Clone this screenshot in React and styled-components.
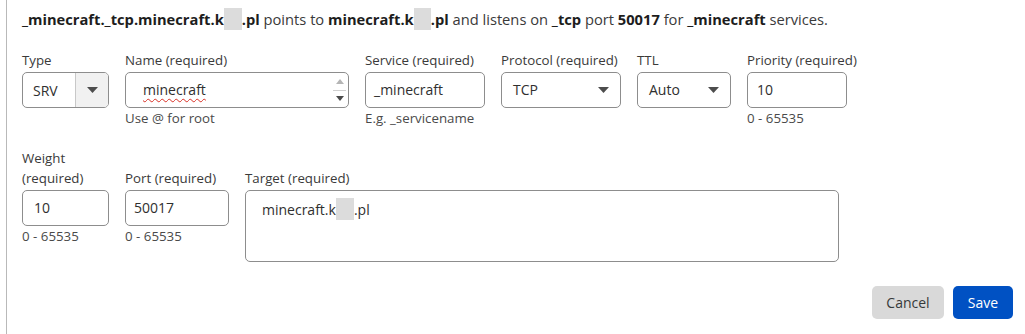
import React from "react";
import styled, { createGlobalStyle } from "styled-components";

const Global = createGlobalStyle`
  html, body { margin: 0; padding: 0; background: #fff; }
  body { font-family: "Open Sans", "Noto Sans", sans-serif; color: #313131; }
`;

const Panel = styled.div`
  margin-left: 6px;
  border-left: 1px solid #b9b9b9;
  padding: 9px 12px 15px 15px;
  min-height: 334px;
  box-sizing: border-box;
  display: flex;
  flex-direction: column;
`;

const Summary = styled.p`
  margin: 0;
  font-size: 14.7px;
  line-height: 20px;
  color: #3a3a3a;
  white-space: nowrap;
  b { color: #1d1d1d; font-weight: 700; }
`;

const Redact = styled.span`
  display: inline-block;
  width: ${(p) => p.$w || 17}px;
  height: 22px;
  background: #dcdcdc;
  vertical-align: middle;
  margin-top: -4px;
`;

const Row = styled.div`
  display: flex;
  align-items: flex-start;
  gap: 16px;
  margin-top: 20px;
`;

const Field = styled.div`
  display: flex;
  flex-direction: column;
  width: ${(p) => p.$w}px;
  flex: none;
`;

const Label = styled.label`
  display: flex;
  align-items: flex-end;
  min-height: ${(p) => (p.$lines || 1) * 20}px;
  font-size: 13.3px;
  line-height: 20px;
  color: #3a3a3a;
  margin-bottom: 2px;
  white-space: ${(p) => (p.$wrap ? "normal" : "nowrap")};
`;

const Box = styled.div`
  box-sizing: border-box;
  height: ${(p) => p.$h || 36}px;
  border: 1px solid #8d8d8d;
  border-radius: 5px;
  display: flex;
  align-items: ${(p) => (p.$top ? "flex-start" : "center")};
  padding: ${(p) => (p.$top ? "9px" : "0")} 11px 0 ${(p) => p.$pl ?? 8}px;
  font-size: 14px;
  line-height: 20px;
  color: #2f2f2f;
  background: #fff;
  position: relative;
`;

const Value = styled.span`
  flex: 1;
  white-space: nowrap;
`;

const Misspelled = styled.span`
  text-decoration: underline wavy #d93025;
  text-decoration-thickness: 1px;
  text-underline-offset: 3px;
`;

const SplitSelect = styled.div`
  box-sizing: border-box;
  height: 36px;
  border: 1px solid #8d8d8d;
  border-radius: 5px;
  display: flex;
  overflow: hidden;
  font-size: 14px;
  color: #2f2f2f;
`;

const SplitText = styled.div`
  flex: 1;
  display: flex;
  align-items: center;
  padding-left: 10px;
  border-right: 1px solid #c8c8c8;
`;

const SplitArrow = styled.div`
  width: 32px;
  display: flex;
  align-items: center;
  justify-content: center;
  background: #f1f1f1;
`;

const Spinner = styled.div`
  position: absolute;
  right: 2px;
  top: 3px;
  bottom: 3px;
  width: 13px;
  display: flex;
  flex-direction: column;
  align-items: center;
  justify-content: space-between;
  padding: 3px 0;
  box-sizing: border-box;
`;

const SpinDivider = styled.div`
  width: 13px;
  height: 1px;
  background: #cfcfcf;
`;

const Help = styled.div`
  font-size: 13.3px;
  line-height: 20px;
  color: #4a4a4a;
  white-space: nowrap;
`;

const Footer = styled.div`
  display: flex;
  justify-content: flex-end;
  gap: 9px;
  margin-top: 24px;
`;

const Button = styled.button`
  font-family: inherit;
  font-size: 14px;
  height: 33px;
  box-sizing: border-box;
  width: ${(p) => (p.$primary ? 60 : 72)}px;
  padding: 0;
  border: none;
  border-radius: 5px;
  background: ${(p) => (p.$primary ? "#0051c3" : "#d9d9d9")};
  color: ${(p) => (p.$primary ? "#fff" : "#36393a")};
  cursor: pointer;
`;

const Caret = ({ color = "#4d4d4d" }) => (
  <svg width="11" height="6" viewBox="0 0 11 6">
    <path d="M0 0 H11 L5.5 6 Z" fill={color} />
  </svg>
);

const SmallTri = ({ up, color }) => (
  <svg width="8" height="5" viewBox="0 0 8 5">
    <path d={up ? "M0 5 H8 L4 0 Z" : "M0 0 H8 L4 5 Z"} fill={color} />
  </svg>
);

export default function App() {
  return (
    <>
      <Global />
      <Panel>
        <Summary>
          <b>_minecraft._tcp.minecraft.k</b>
          <Redact $w={18} />
          <b>.pl</b> points to <b>minecraft.k</b>
          <Redact $w={17} />
          <b>.pl</b> and listens on <b>_tcp</b> port <b>50017</b> for{" "}
          <b>_minecraft</b> services.
        </Summary>

        <Row>
          <Field $w={87}>
            <Label>Type</Label>
            <SplitSelect>
              <SplitText>SRV</SplitText>
              <SplitArrow>
                <Caret />
              </SplitArrow>
            </SplitSelect>
          </Field>
          <Field $w={224}>
            <Label>Name (required)</Label>
            <Box $pl={17}>
              <Value>
                <Misspelled>minecraft</Misspelled>
              </Value>
              <Spinner>
                <SmallTri up color="#b5b5b5" />
                <SpinDivider />
                <SmallTri color="#4a4a4a" />
              </Spinner>
            </Box>
            <Help>Use @ for root</Help>
          </Field>
          <Field $w={120}>
            <Label>Service (required)</Label>
            <Box>
              <Value>_minecraft</Value>
            </Box>
            <Help>E.g. _servicename</Help>
          </Field>
          <Field $w={120}>
            <Label>Protocol (required)</Label>
            <Box $pl={11}>
              <Value>TCP</Value>
              <Caret />
            </Box>
          </Field>
          <Field $w={94}>
            <Label>TTL</Label>
            <Box $pl={11}>
              <Value>Auto</Value>
              <Caret />
            </Box>
          </Field>
          <Field $w={100}>
            <Label>Priority (required)</Label>
            <Box $pl={9}>
              <Value>10</Value>
            </Box>
            <Help>0 - 65535</Help>
          </Field>
        </Row>

        <Row>
          <Field $w={87}>
            <Label $lines={2} $wrap>Weight (required)</Label>
            <Box $pl={11}>
              <Value>10</Value>
            </Box>
            <Help>0 - 65535</Help>
          </Field>
          <Field $w={104}>
            <Label $lines={2}>Port (required)</Label>
            <Box>
              <Value>50017</Value>
            </Box>
            <Help>0 - 65535</Help>
          </Field>
          <Field $w={594}>
            <Label $lines={2}>Target (required)</Label>
            <Box $h={72} $top $pl={16}>
              <Value>
                minecraft.k
                <Redact $w={18} />
                .pl
              </Value>
            </Box>
          </Field>
        </Row>

        <Footer>
          <Button>Cancel</Button>
          <Button $primary>Save</Button>
        </Footer>
      </Panel>
    </>
  );
}
